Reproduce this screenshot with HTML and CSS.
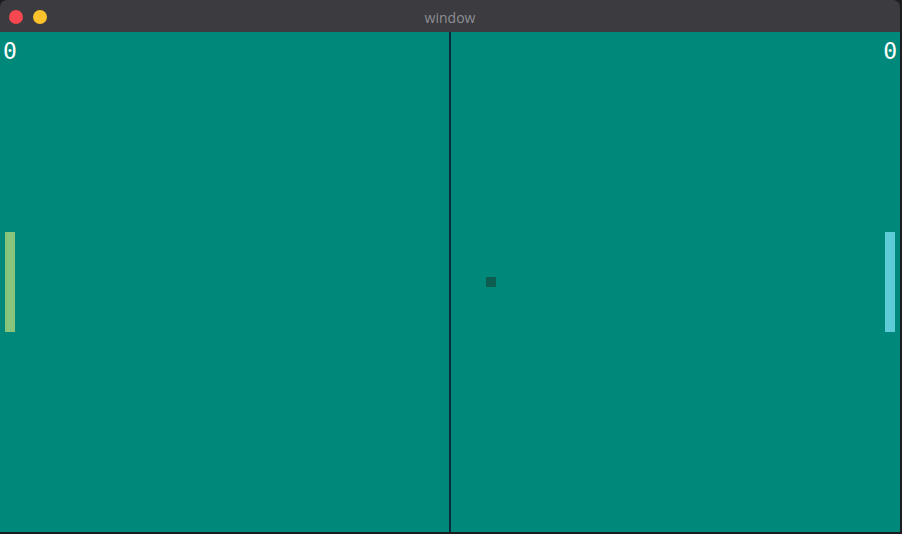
FILE: index.html
```html
<!DOCTYPE html>
<html>
<head>
<meta charset="utf-8">
<link rel="stylesheet" href="styles.css">
</head>
<body>
<div class="window">
  <div class="titlebar">
    <div class="lights">
      <span class="light red"></span>
      <span class="light yellow"></span>
    </div>
    <div class="title">window</div>
  </div>
  <div class="game">
    <div class="score left">0</div>
    <div class="score right">0</div>
    <div class="divider"></div>
    <div class="paddle p1"></div>
    <div class="paddle p2"></div>
    <div class="ball"></div>
  </div>
</div>
</body>
</html>
```
FILE: styles.css
```css
html, body {
  margin: 0;
  padding: 0;
  background: #1c1d20;
  width: 902px;
  height: 534px;
  overflow: hidden;
}
.window {
  width: 900px;
  display: flex;
  flex-direction: column;
}
.titlebar {
  height: 32px;
  background: #3b3b40;
  border-radius: 7px 7px 0 0;
  position: relative;
  display: flex;
  align-items: center;
  justify-content: center;
}
.lights {
  position: absolute;
  left: 9px;
  top: 10px;
  display: flex;
  gap: 10px;
}
.light {
  width: 14px;
  height: 14px;
  border-radius: 50%;
  display: block;
}
.red { background: #f4474f; }
.yellow { background: #fcc22d; }
.title {
  font-family: "Open Sans", "DejaVu Sans", sans-serif;
  font-size: 14px;
  color: #8e8e93;
  margin-top: 2px;
}
.game {
  position: relative;
  height: 500px;
  background: #00897b;
}
.score {
  position: absolute;
  top: 6px;
  font-family: "DejaVu Sans Mono", monospace;
  font-size: 23px;
  line-height: 26px;
  color: #ffffff;
}
.score.left { left: 3px; }
.score.right { right: 3px; }
.divider {
  position: absolute;
  left: 449px;
  top: 0;
  width: 2px;
  height: 500px;
  background: #0b2a3a;
}
.paddle {
  position: absolute;
  top: 200px;
  width: 10px;
  height: 100px;
}
.p1 { left: 5px; background: #86c57b; }
.p2 { left: 885px; background: #5ecbd9; }
.ball {
  position: absolute;
  left: 486px;
  top: 245px;
  width: 10px;
  height: 10px;
  background: #0d5e50;
}
```
